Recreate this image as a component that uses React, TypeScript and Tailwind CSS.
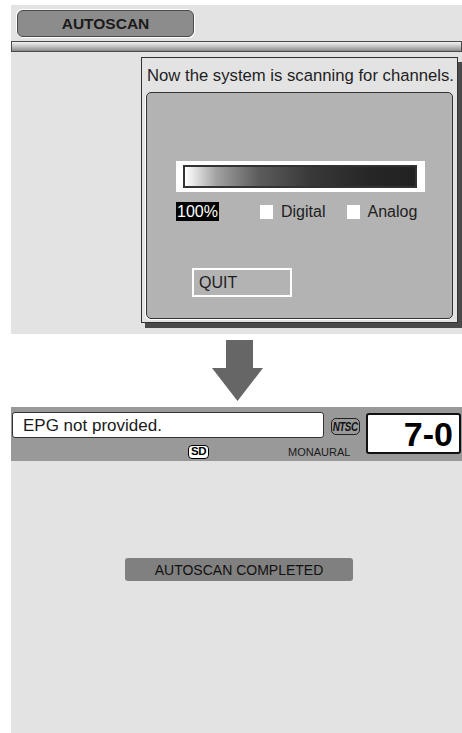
import React from "react";

const font = { fontFamily: '"Liberation Sans", Arial, sans-serif' };

export default function App() {
  return (
    <div className="w-[462px] h-[733px] bg-white flex flex-col pl-[11px] pt-[5px] text-[#1e1e1e] overflow-hidden" style={font}>
      {/* Top panel */}
      <div className="w-[451px] h-[329px] bg-[#e3e3e3] flex flex-col">
        <div className="ml-[6px] mt-[5px] w-[177px] h-[27px] rounded-[6px] bg-[#8c8c8c] border border-[#4a4a4a] shadow-[1px_1px_0_#ffffff,-1px_-1px_0_#ffffff] flex items-center justify-center">
          <span className="font-bold text-[15.5px] leading-none text-[#1a1a1a]">AUTOSCAN</span>
        </div>
        <div className="mt-[4px] h-[11px] border border-[#4a4a4a] bg-[linear-gradient(to_bottom,#f2f2f2,#c8c8c8_45%,#8a8a8a)]" />
        {/* dialog */}
        <div className="ml-[130px] mt-[5px] w-[317px] h-[266px] border border-[#333] bg-[#e3e3e3] shadow-[4px_5px_0_#4a4a4a] flex flex-col">
          <div className="pl-[5px] pt-[9px] text-[16.7px] leading-[18px] whitespace-nowrap text-[#1e1e1e]">Now the system is scanning for channels.</div>
          <div className="ml-[4px] mt-[7px] w-[307px] h-[227px] border border-[#333] rounded-[5px] bg-[#b3b3b3] shadow-[-1px_1px_0_#ffffff] flex flex-col">
            <div className="ml-[29px] mt-[68px] w-[249px] h-[31px] bg-white pl-[7px] pr-[8px] py-[4px]">
              <div className="w-full h-full border-2 border-[#333] bg-[linear-gradient(to_right,#ffffff,#a0a0a0_14%,#5c5c5c_32%,#383838_55%,#262626_80%,#222222)]" />
            </div>
            <div className="ml-[29px] mt-[10px] flex items-center h-[19px]">
              <div className="w-[43px] h-[19px] bg-black text-white text-[16px] leading-[19px] pl-[1px]">100%</div>
              <div className="ml-[41px] w-[13px] h-[14px] bg-white" />
              <div className="ml-[8px] text-[16px] leading-[19px]">Digital</div>
              <div className="ml-[22px] w-[13px] h-[14px] bg-white" />
              <div className="ml-[7px] text-[16px] leading-[19px]">Analog</div>
            </div>
            <div className="ml-[45px] mt-[47px] w-[100px] h-[29px] border-2 border-white flex items-center pl-[5px] text-[16px] leading-none">QUIT</div>
          </div>
        </div>
      </div>

      {/* Arrow */}
      <div className="h-[73px] flex">
        <svg className="ml-[201px] mt-[6px]" width="51" height="61" viewBox="0 0 51 61">
          <path d="M14 0 H41 V28 H51 L25.5 61 L0 28 H14 Z" fill="#666666" />
        </svg>
      </div>

      {/* Status band */}
      <div className="w-[451px] h-[54px] bg-[#999999] flex">
        <div className="w-[355px] flex flex-col">
          <div className="flex items-start mt-[5px]">
            <div className="ml-[1px] w-[312px] h-[26px] bg-white border border-[#333] rounded-[3px] pl-[10px] flex items-center text-[17px] leading-none text-[#1a1a1a]">EPG not provided.</div>
            <div className="ml-[7px] mt-[6px] w-[29px] h-[17px] border-[1.5px] border-[#222] rounded-[5px] flex items-center justify-center overflow-hidden">
              <span className="italic font-bold text-[12px] leading-none tracking-[-0.6px] scale-x-[0.82] text-[#111]">NTSC</span>
            </div>
          </div>
          <div className="flex items-center mt-[6px]">
            <div className="ml-[177px] w-[21px] h-[14px] border-[1.5px] border-black rounded-[4px] bg-white flex items-center justify-center">
              <span className="font-bold text-[11.5px] leading-none tracking-[-0.5px] text-black">SD</span>
            </div>
            <div className="ml-[79px] text-[11px] leading-[13px] mt-[2px] text-[#1a1a1a]">MONAURAL</div>
          </div>
        </div>
        <div className="mt-[6px] w-[95px] h-[41px] border-2 border-[#111] rounded-[3px] bg-white flex items-center justify-end pr-[6px]">
          <span className="font-bold text-[34px] leading-none text-black">7-0</span>
        </div>
      </div>

      {/* Lower area */}
      <div className="w-[451px] flex-1 bg-[#e3e3e3] flex flex-col">
        <div className="ml-[114px] mt-[97px] w-[228px] h-[23px] bg-[#808080] rounded-[3px] flex items-center justify-center text-[14px] leading-none text-[#111]">AUTOSCAN COMPLETED</div>
      </div>
    </div>
  );
}
